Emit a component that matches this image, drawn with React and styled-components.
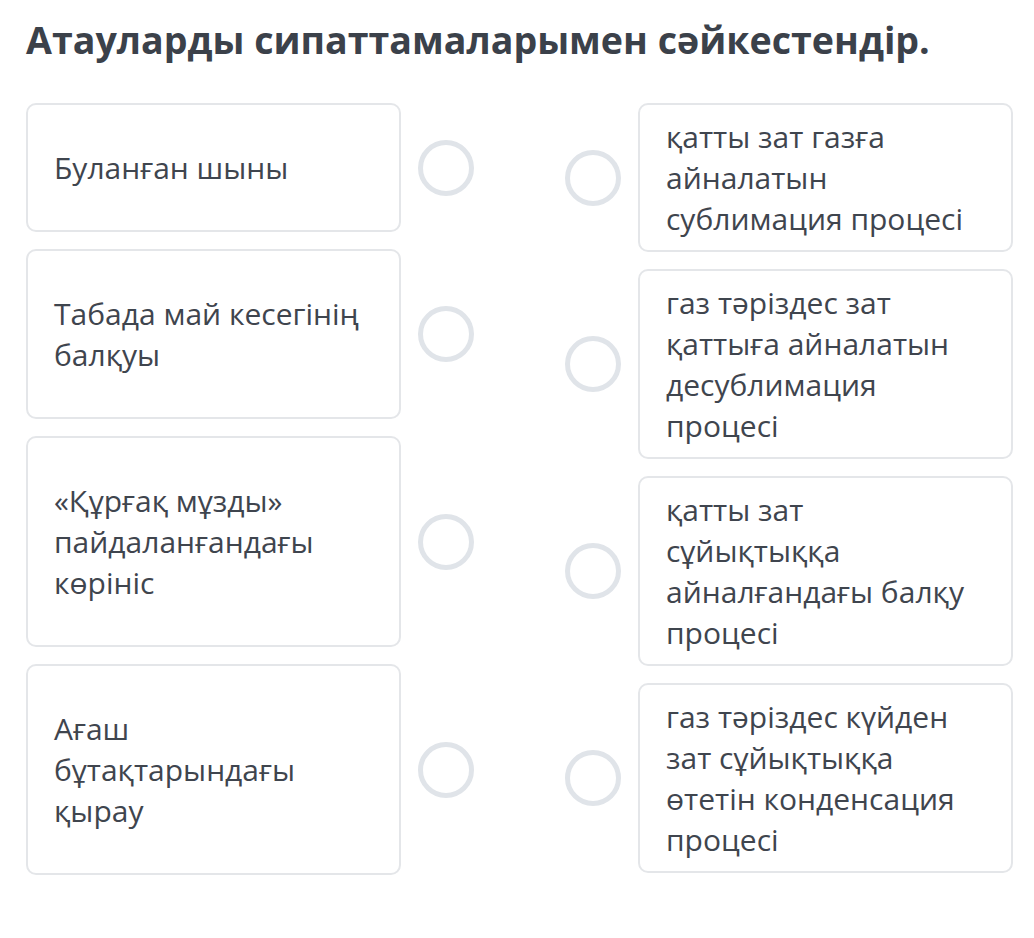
import styled, { createGlobalStyle } from "styled-components";

const GlobalStyle = createGlobalStyle`
  body {
    margin: 0;
    background: #ffffff;
    font-family: "Open Sans", "Noto Sans", sans-serif;
  }
`;

const Page = styled.div`
  padding: 14px 0 0 26px;
  width: 1034px;
  box-sizing: border-box;
`;

const Title = styled.h1`
  margin: 0 0 37px;
  font-size: 37.6px;
  font-weight: 700;
  line-height: 52px;
  color: #3b414a;
`;

const Board = styled.div`
  display: flex;
  gap: 91px;
  align-items: flex-start;
`;

const Column = styled.div`
  display: flex;
  flex-direction: column;
  gap: ${(p) => p.$gap}px;
`;

const Item = styled.div`
  display: flex;
  align-items: center;
  gap: 17px;
`;

const Card = styled.div`
  width: 375px;
  box-sizing: border-box;
  padding: ${(p) => p.$pad}px 34px ${(p) => p.$pad}px 26px;
  border: 2px solid #e4e6e9;
  border-radius: 10px;
  font-size: 30px;
  line-height: 41px;
  color: #3f454e;
`;

const Dot = styled.div`
  width: 56px;
  height: 56px;
  box-sizing: border-box;
  border: 5px solid #e0e4e9;
  border-radius: 50%;
  flex-shrink: 0;
`;

const names = [
  "Буланған шыны",
  "Табада май кесегінің балқуы",
  "«Құрғақ мұзды» пайдаланғандағы көрініс",
  "Ағаш бұтақтарындағы қырау",
];

const descriptions = [
  "қатты зат газға айналатын сублимация процесі",
  "газ тәріздес зат қаттыға айналатын десублимация процесі",
  "қатты зат сұйықтыққа айналғандағы балқу процесі",
  "газ тәріздес күйден зат сұйықтыққа өтетін конденсация процесі",
];

export default function App() {
  return (
    <Page>
      <GlobalStyle />
      <Title>Атауларды сипаттамаларымен сәйкестендір.</Title>
      <Board>
        <Column $gap={17}>
          {names.map((n) => (
            <Item key={n}>
              <Card $pad={42}>{n}</Card>
              <Dot />
            </Item>
          ))}
        </Column>
        <Column $gap={17}>
          {descriptions.map((d) => (
            <Item key={d}>
              <Dot />
              <Card $pad={11}>{d}</Card>
            </Item>
          ))}
        </Column>
      </Board>
    </Page>
  );
}
